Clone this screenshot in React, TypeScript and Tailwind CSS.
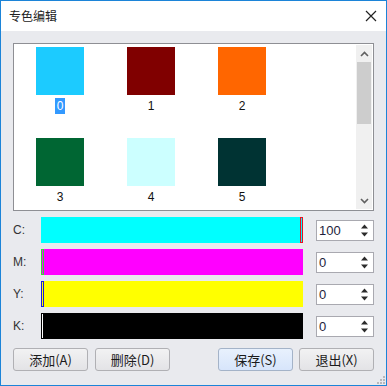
import React from 'react';

const swatches = [
  { id: 0, color: '#1ccbff' },
  { id: 1, color: '#800000' },
  { id: 2, color: '#ff6600' },
  { id: 3, color: '#006633' },
  { id: 4, color: '#ccffff' },
  { id: 5, color: '#003333' },
];

const channels = [
  { key: 'C', fill: '#00ffff', thumb: 'right', thumbBorder: 'border-[#e81123]', thumbFill: 'bg-[#00ffff]', value: '100' },
  { key: 'M', fill: '#ff00ff', thumb: 'left', thumbBorder: 'border-[#33dd33]', thumbFill: 'bg-[#ff00ff]', value: '0' },
  { key: 'Y', fill: '#ffff00', thumb: 'left', thumbBorder: 'border-[#1a1adb]', thumbFill: 'bg-[#ffff00]', value: '0' },
  { key: 'K', fill: '#000000', thumb: 'left', thumbBorder: 'border-black', thumbFill: 'bg-white', value: '0' },
];

const font = { fontFamily: '"Noto Sans CJK SC", "Liberation Sans", sans-serif' };

const SpinBox: React.FC<{ value: string }> = ({ value }) => (
  <div className="w-[58px] h-[21px] border border-[#a9a9b0] bg-white flex items-center justify-between pl-[2px] pr-[4px]">
    <span className="text-[13px] leading-none text-[#1e1e3c]" style={{ fontFamily: '"Liberation Sans", sans-serif' }}>
      {value}
    </span>
    <svg width="9" height="15" viewBox="0 0 9 15">
      <path d="M4.5 1.5 L8 5.5 L1 5.5 Z" fill="#2b2b2b" />
      <path d="M4.5 13.5 L8 9.5 L1 9.5 Z" fill="#2b2b2b" />
    </svg>
  </div>
);

const Button: React.FC<{ label: string; primary?: boolean; className?: string }> = ({ label, primary, className }) => (
  <button
    className={
      'w-[75px] h-[23px] rounded-[3px] border text-[13px] leading-none text-[#1b1b1b] ' +
      (primary
        ? 'border-[#a4b3c8] bg-gradient-to-b from-[#e8f1fd] to-[#d7e5fb] '
        : 'border-[#b0b0b4] bg-gradient-to-b from-[#f2f2f3] to-[#e3e3e6] ') +
      (className || '')
    }
    style={font}
  >
    {label}
  </button>
);

export default function App() {
  return (
    <div className="w-[387px] h-[386px] border border-[#1c84d8] bg-[#e9eaee] flex flex-col overflow-hidden" style={font}>
      <div className="h-[30px] bg-white flex items-center justify-between pl-[8px] pr-[9px] shrink-0">
        <span className="text-[12px] text-[#222]">专色编辑</span>
        <svg width="12" height="12" viewBox="0 0 12 12">
          <path d="M1 1 L11 11 M11 1 L1 11" stroke="#222" strokeWidth="1.2" />
        </svg>
      </div>

      <div className="flex flex-col pl-[12px] pt-[12px]">
        {/* color list */}
        <div className="w-[361px] h-[168px] border border-[#8e8f94] bg-white flex">
          <div className="flex-1 grid grid-cols-3 pl-[22px] pt-[3px] gap-x-[43px] gap-y-[24px] content-start w-fit" style={{ gridTemplateColumns: '48px 48px 48px' }}>
            {swatches.map((s) => (
              <div key={s.id} className="flex flex-col items-center w-[48px]">
                <div className="w-[48px] h-[48px]" style={{ backgroundColor: s.color }} />
                <div className="mt-[3px] h-[16px] flex items-center">
                  <span
                    className={
                      'text-[12px] leading-[16px] px-[2px] ' + (s.id === 0 ? 'bg-[#3399ff] text-white' : 'text-[#111]')
                    }
                    style={{ fontFamily: '"Liberation Sans", sans-serif' }}
                  >
                    {s.id}
                  </span>
                </div>
              </div>
            ))}
          </div>
          <div className="w-[16px] mr-[1px] my-[1px] bg-[#f0f0f0] flex flex-col">
            <div className="h-[17px] flex items-center justify-center">
              <svg width="9" height="6" viewBox="0 0 9 6">
                <path d="M1 5 L4.5 1.5 L8 5" stroke="#606060" strokeWidth="1.6" fill="none" />
              </svg>
            </div>
            <div className="h-[62px] mx-[1px] bg-[#cdcdcd]" />
            <div className="flex-1" />
            <div className="h-[17px] flex items-center justify-center">
              <svg width="9" height="6" viewBox="0 0 9 6">
                <path d="M1 1 L4.5 4.5 L8 1" stroke="#606060" strokeWidth="1.6" fill="none" />
              </svg>
            </div>
          </div>
        </div>

        {/* CMYK sliders */}
        <div className="flex flex-col gap-[6px] mt-[6px]">
          {channels.map((c) => (
            <div key={c.key} className="flex items-center h-[26px]">
              <span className="w-[28px] text-[12px] text-[#333]" style={{ fontFamily: '"Liberation Sans", sans-serif' }}>
                {c.key}:
              </span>
              <div className="w-[262px] h-[26px] relative" style={{ backgroundColor: c.fill }}>
                <div
                  className={
                    'absolute top-0 w-[3px] h-[26px] border ' +
                    c.thumbBorder +
                    ' ' +
                    c.thumbFill +
                    (c.thumb === 'right' ? ' right-0' : ' left-0')
                  }
                />
              </div>
              <div className="ml-[13px]">
                <SpinBox value={c.value} />
              </div>
            </div>
          ))}
        </div>

        {/* buttons */}
        <div className="flex mt-[9px]">
          <Button label="添加(A)" />
          <Button label="删除(D)" className="ml-[7px]" />
          <Button label="保存(S)" primary className="ml-[48px]" />
          <Button label="退出(X)" className="ml-[6px]" />
        </div>
      </div>

      <div className="flex-1 flex items-end justify-end pr-[1px] pb-[1px]">
        <svg width="8" height="8" viewBox="0 0 8 8">
          <rect x="6" y="0" width="2" height="2" fill="#b8b8bc" />
          <rect x="3" y="3" width="2" height="2" fill="#b8b8bc" />
          <rect x="6" y="3" width="2" height="2" fill="#b8b8bc" />
          <rect x="0" y="6" width="2" height="2" fill="#b8b8bc" />
          <rect x="3" y="6" width="2" height="2" fill="#b8b8bc" />
          <rect x="6" y="6" width="2" height="2" fill="#b8b8bc" />
        </svg>
      </div>
    </div>
  );
}
